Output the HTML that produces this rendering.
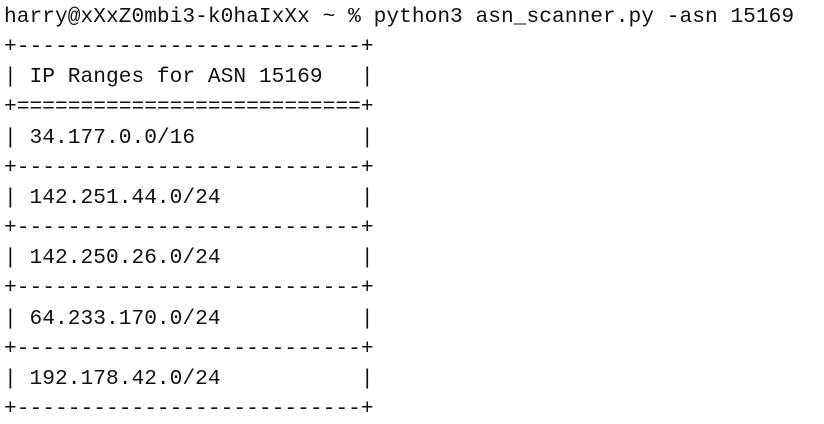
<html><head><style>
body{margin:0;background:#fff;width:824px;height:418px;overflow:hidden}
pre{position:absolute;left:4px;top:2px;margin:0;font-family:"Liberation Mono",monospace;font-size:21.2px;line-height:30.15px;color:#111;letter-spacing:0.03px}
</style></head><body><pre>harry@xXxZ0mbi3-k0haIxXx ~ % python3 asn_scanner.py -asn 15169
+---------------------------+
| IP Ranges for ASN 15169   |
+===========================+
| 34.177.0.0/16             |
+---------------------------+
| 142.251.44.0/24           |
+---------------------------+
| 142.250.26.0/24           |
+---------------------------+
| 64.233.170.0/24           |
+---------------------------+
| 192.178.42.0/24           |
+---------------------------+</pre></body></html>
